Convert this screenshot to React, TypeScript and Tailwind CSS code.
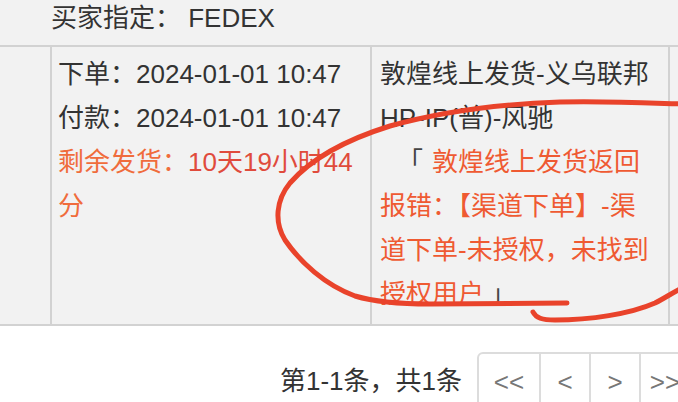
const font = 'font-["Liberation_Sans","Noto_Sans_CJK_SC",sans-serif]';

const pages = [
  { label: '<<', w: 'w-[64px]' },
  { label: '<', w: 'w-[50px]' },
  { label: '>', w: 'w-[50px]' },
  { label: '>>', w: 'w-[50px]' },
];

function Annotation() {
  // hand-drawn red circle over the error message
  return (
    <svg
      className="pointer-events-none absolute left-0 top-0"
      width="678"
      height="402"
      viewBox="0 0 678 402"
      fill="none"
    >
      <path
        d="M567 303 L430 304 C400 304 375 302 355 296 C325 285 300 262 285 240 C274 222 276 200 290 183 C310 160 345 140 390 126 C440 112 500 104 560 102 C610 101 650 103 682 104"
        stroke="#e9432b"
        strokeWidth="5"
        strokeLinecap="round"
        strokeLinejoin="round"
      />
      <path
        d="M533 312 C536 318 542 320 555 320 C590 320 630 314 655 303 C665 298 672 293 682 288"
        stroke="#e9432b"
        strokeWidth="5"
        strokeLinecap="round"
        strokeLinejoin="round"
      />
    </svg>
  );
}

export default function App() {
  return (
    <div className={`relative h-[402px] w-[678px] overflow-hidden bg-white text-[26px] text-[#333] ${font}`}>
      <div className="bg-[#f2f2f2]">
        {/* Buyer row */}
        <div className="h-[47px] border-b-2 border-[#d2d2d2] pl-[51px] leading-[36px]">
          买家指定： FEDEX
        </div>

        {/* Order row */}
        <div className="flex border-b-2 border-[#d2d2d2] leading-[44px]">
          <div className="w-[52px] shrink-0 border-r-2 border-[#d2d2d2]" />
          <div className="w-[320px] shrink-0 border-r-2 border-[#d2d2d2] pl-[6px] pt-[5px]">
            <div>下单：2024-01-01 10:47</div>
            <div>付款：2024-01-01 10:47</div>
            <div>
              <span className="text-[#f06c3c]">剩余发货：</span>
              <span className="text-[#e04b3c]">10天19小时44</span>
              <span className="text-[#f06c3c]">分</span>
            </div>
          </div>
          <div className="w-[298px] shrink-0 border-r-2 border-[#d2d2d2] pb-[8px] pl-[8px] pr-[12px] pt-[5px]">
            <div>敦煌线上发货-义乌联邦HP-IP(普)-风驰</div>
            <div className="indent-[26px]">
              <span className="relative left-[-9px] text-[#444]">「</span>
              <span className="text-[#ef5a32]">敦煌线上发货返回报错：【渠道下单】-渠道下单-未授权，未找到授权用户</span>
              <span className="relative left-[6px] text-[#444]">」</span>
            </div>
          </div>
        </div>
      </div>

      {/* Pagination */}
      <div className="flex items-start pl-[280px] pt-[26px]">
        <span className="mt-[14px] shrink-0 whitespace-nowrap leading-[30px]">第1-1条，共1条</span>
        <ul className="ml-[15px] flex shrink-0">
          {pages.map((p, i) => (
            <li
              key={p.label}
              className={`flex h-[60px] ${p.w} shrink-0 items-center justify-center border-2 border-[#dcdcdc] text-[#777] ${
                i === 0 ? 'rounded-tl-[6px]' : 'border-l-0'
              }`}
            >
              {p.label}
            </li>
          ))}
        </ul>
      </div>

      <Annotation />
    </div>
  );
}
